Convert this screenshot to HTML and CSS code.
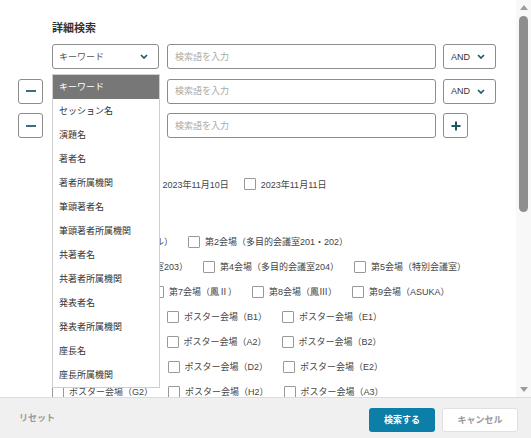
FILE: index.html
```html
<!DOCTYPE html>
<html lang="ja">
<head>
<meta charset="utf-8">
<title>詳細検索</title>
<link rel="stylesheet" href="styles.css">
</head>
<body>
<div class="modal">
  <div class="main">
    <div class="content">
      <h2 class="title">詳細検索</h2>
      <div class="conditions">
        <div class="cond">
          <span class="slot"></span>
          <div class="field">
            <div class="select">
              <span>キーワード</span>
              <svg class="chev" width="8" height="5" viewBox="0 0 8 5"><path d="M1 1l3 3 3-3"/></svg>
            </div>
            <ul class="menu">
              <li class="active">キーワード</li>
              <li>セッション名</li>
              <li>演題名</li>
              <li>著者名</li>
              <li>著者所属機関</li>
              <li>筆頭著者名</li>
              <li>筆頭著者所属機関</li>
              <li>共著者名</li>
              <li>共著者所属機関</li>
              <li>発表者名</li>
              <li>発表者所属機関</li>
              <li>座長名</li>
              <li>座長所属機関</li>
            </ul>
          </div>
          <input class="term" type="text" placeholder="検索語を入力">
          <div class="select select-op">
            <span>AND</span>
            <svg class="chev" width="8" height="5" viewBox="0 0 8 5"><path d="M1 1l3 3 3-3"/></svg>
          </div>
        </div>
        <div class="cond">
          <button class="icon-btn slot" type="button"><svg width="10" height="10" viewBox="0 0 10 10"><path d="M0 5h10"/></svg></button>
          <div class="field">
            <div class="select">
              <span>キーワード</span>
              <svg class="chev" width="8" height="5" viewBox="0 0 8 5"><path d="M1 1l3 3 3-3"/></svg>
            </div>
          </div>
          <input class="term" type="text" placeholder="検索語を入力">
          <div class="select select-op">
            <span>AND</span>
            <svg class="chev" width="8" height="5" viewBox="0 0 8 5"><path d="M1 1l3 3 3-3"/></svg>
          </div>
        </div>
        <div class="cond">
          <button class="icon-btn slot" type="button"><svg width="10" height="10" viewBox="0 0 10 10"><path d="M0 5h10"/></svg></button>
          <div class="field">
            <div class="select">
              <span>キーワード</span>
              <svg class="chev" width="8" height="5" viewBox="0 0 8 5"><path d="M1 1l3 3 3-3"/></svg>
            </div>
          </div>
          <input class="term" type="text" placeholder="検索語を入力">
          <button class="icon-btn plus" type="button"><svg width="10" height="10" viewBox="0 0 10 10"><path d="M0.5 5h9M5 0.5v9"/></svg></button>
        </div>
      </div>

      <section class="group group-date">
        <div class="group-label">開催日</div>
        <div class="checks">
          <label class="check"><input type="checkbox"><span>2023年11月9日</span></label>
          <label class="check"><input type="checkbox"><span>2023年11月10日</span></label>
          <label class="check"><input type="checkbox"><span>2023年11月11日</span></label>
        </div>
      </section>

      <section class="group group-venue">
        <div class="group-label">会場</div>
        <div class="checks">
          <label class="check"><input type="checkbox"><span>第1会場（メインホール）</span></label>
          <label class="check"><input type="checkbox"><span>第2会場（多目的会議室201・202）</span></label>
          <label class="check"><input type="checkbox"><span>第3会場（多目的会議室203）</span></label>
          <label class="check"><input type="checkbox"><span>第4会場（多目的会議室204）</span></label>
          <label class="check"><input type="checkbox"><span>第5会場（特別会議室）</span></label>
          <label class="check"><input type="checkbox"><span>第6会場（鳳Ⅰ）</span></label>
          <label class="check"><input type="checkbox"><span>第7会場（鳳Ⅱ）</span></label>
          <label class="check"><input type="checkbox"><span>第8会場（鳳Ⅲ）</span></label>
          <label class="check"><input type="checkbox"><span>第9会場（ASUKA）</span></label>
          <label class="check"><input type="checkbox"><span>ポスター会場（A1）</span></label>
          <label class="check"><input type="checkbox"><span>ポスター会場（B1）</span></label>
          <label class="check"><input type="checkbox"><span>ポスター会場（E1）</span></label>
          <label class="check"><input type="checkbox"><span>ポスター会場（F1）</span></label>
          <label class="check"><input type="checkbox"><span>ポスター会場（A2）</span></label>
          <label class="check"><input type="checkbox"><span>ポスター会場（B2）</span></label>
          <label class="check"><input type="checkbox"><span>ポスター会場（C2）</span></label>
          <label class="check"><input type="checkbox"><span>ポスター会場（D2）</span></label>
          <label class="check"><input type="checkbox"><span>ポスター会場（E2）</span></label>
          <label class="check"><input type="checkbox"><span>ポスター会場（G2）</span></label>
          <label class="check"><input type="checkbox"><span>ポスター会場（H2）</span></label>
          <label class="check"><input type="checkbox"><span>ポスター会場（A3）</span></label>
          <label class="check"><input type="checkbox"><span>ポスター会場（B3）</span></label>
        </div>
      </section>
    </div>
    <div class="scrollbar">
      <span class="sb-btn"><span class="tri tri-up"></span></span>
      <div class="sb-track"><div class="sb-thumb"></div></div>
      <span class="sb-btn"><span class="tri tri-down"></span></span>
    </div>
  </div>
  <footer class="footer">
    <button class="reset" type="button">リセット</button>
    <div class="actions">
      <button class="btn btn-primary" type="button">検索する</button>
      <button class="btn btn-cancel" type="button">キャンセル</button>
    </div>
  </footer>
</div>
</body>
</html>
```

FILE: styles.css
```css
* { box-sizing: border-box; }
html, body { margin: 0; padding: 0; }
body {
  width: 531px;
  height: 438px;
  overflow: hidden;
  background: #fff;
  color: #333;
  font-family: "Liberation Sans", "Noto Sans CJK JP", sans-serif;
  font-size: 9px;
}
.modal { display: flex; flex-direction: column; height: 438px; }
.main { display: flex; height: 397px; overflow: hidden; }
.content { flex: 1; min-width: 0; padding: 20px 0 0 18px; overflow: hidden; }

.title {
  margin: 0 0 8px 34px;
  font-size: 11px;
  line-height: 16px;
  font-weight: 700;
  color: #333;
}

.conditions { display: flex; flex-direction: column; gap: 9.5px; }
.cond { display: flex; align-items: center; height: 25px; }
.slot { width: 25px; height: 25px; margin-right: 9px; flex: none; }
.field { position: relative; width: 107px; height: 25px; margin-right: 8px; flex: none; }

.select {
  height: 25px;
  border: 1px solid #8c8c8c;
  border-radius: 3px;
  background: #fff;
  display: flex;
  align-items: center;
  justify-content: space-between;
  padding: 0 10px 0 6px;
  color: #555;
}
.select-op { width: 53px; padding-left: 7px; color: #333; flex: none; }
.chev { display: block; }
.chev path { fill: none; stroke: #1e5a6b; stroke-width: 1.7; }

.term {
  width: 269px;
  height: 25px;
  margin: 0 7px 0 0;
  border: 1px solid #8c8c8c;
  border-radius: 3px;
  padding: 0 7px;
  font-family: inherit;
  font-size: 9px;
  color: #333;
  background: #fff;
  flex: none;
}
.term::placeholder { color: #aaa; }

.icon-btn {
  width: 25px;
  height: 25px;
  border: 1px solid #8c8c8c;
  border-radius: 3px;
  background: #fff;
  display: flex;
  align-items: center;
  justify-content: center;
  padding: 0;
  flex: none;
}
.icon-btn svg { display: block; }
.icon-btn path { fill: none; stroke: #3b6f7f; stroke-width: 2; }
.plus path { stroke: #1f5566; }

.menu {
  position: absolute;
  top: 30px;
  left: 0;
  width: 108px;
  margin: 0;
  padding: 0;
  list-style: none;
  border: 1px solid #cfcfcf;
  background: #fff;
  z-index: 2;
}
.menu li {
  height: 24px;
  line-height: 24px;
  padding-left: 6px;
  color: #333;
  white-space: nowrap;
}
.menu li.active { background: #777; color: #fff; }

.group { margin-left: 34px; width: 443px; padding-top: 12px; }
.group-label { line-height: 16px; font-size: 10px; font-weight: 700; color: #333; }
.checks { display: flex; flex-wrap: wrap; column-gap: 15px; }
.group-date .checks { margin-top: 6px; }
.group-date .check { height: 24px; }
.group-venue .checks { margin-top: 5px; }
.check {
  display: flex;
  align-items: center;
  gap: 5px;
  height: 25px;
  white-space: nowrap;
  color: #444;
}
.check input {
  appearance: none;
  -webkit-appearance: none;
  width: 12px;
  height: 12px;
  margin: 0;
  border: 1px solid #999;
  border-radius: 1px;
  background: #fff;
  flex: none;
}

.scrollbar {
  width: 15px;
  flex: none;
  background: #f8f8f8;
  display: flex;
  flex-direction: column;
  align-items: center;
}
.sb-btn { height: 15px; width: 15px; display: flex; align-items: center; justify-content: center; flex: none; }
.tri { width: 0; height: 0; border-left: 4px solid transparent; border-right: 4px solid transparent; }
.tri-up { border-bottom: 5px solid #9c9c9c; }
.tri-down { border-top: 5px solid #9c9c9c; }
.sb-track { flex: 1; width: 15px; display: flex; justify-content: center; }
.sb-thumb { width: 9px; height: 196px; margin-top: 1px; border-radius: 4.5px; background: #8e8e8e; }

.footer {
  height: 41px;
  border-top: 1px solid #dcdcdc;
  background: #f0f0f0;
  display: flex;
  align-items: center;
  justify-content: space-between;
  padding: 3px 13px 0 19px;
}
.reset {
  margin-top: -4px;
  padding: 0;
  border: 0;
  background: none;
  font-family: inherit;
  font-size: 9px;
  font-weight: 700;
  color: #999;
}
.actions { display: flex; gap: 7px; }
.btn {
  height: 24px;
  border-radius: 3px;
  font-family: inherit;
  font-size: 9px;
  font-weight: 700;
  padding: 0;
}
.btn-primary { width: 66px; border: 0; background: #0b7fa7; color: #fff; }
.btn-cancel { width: 76px; border: 1px solid #e0e0e0; background: #fff; color: #999; }
```
